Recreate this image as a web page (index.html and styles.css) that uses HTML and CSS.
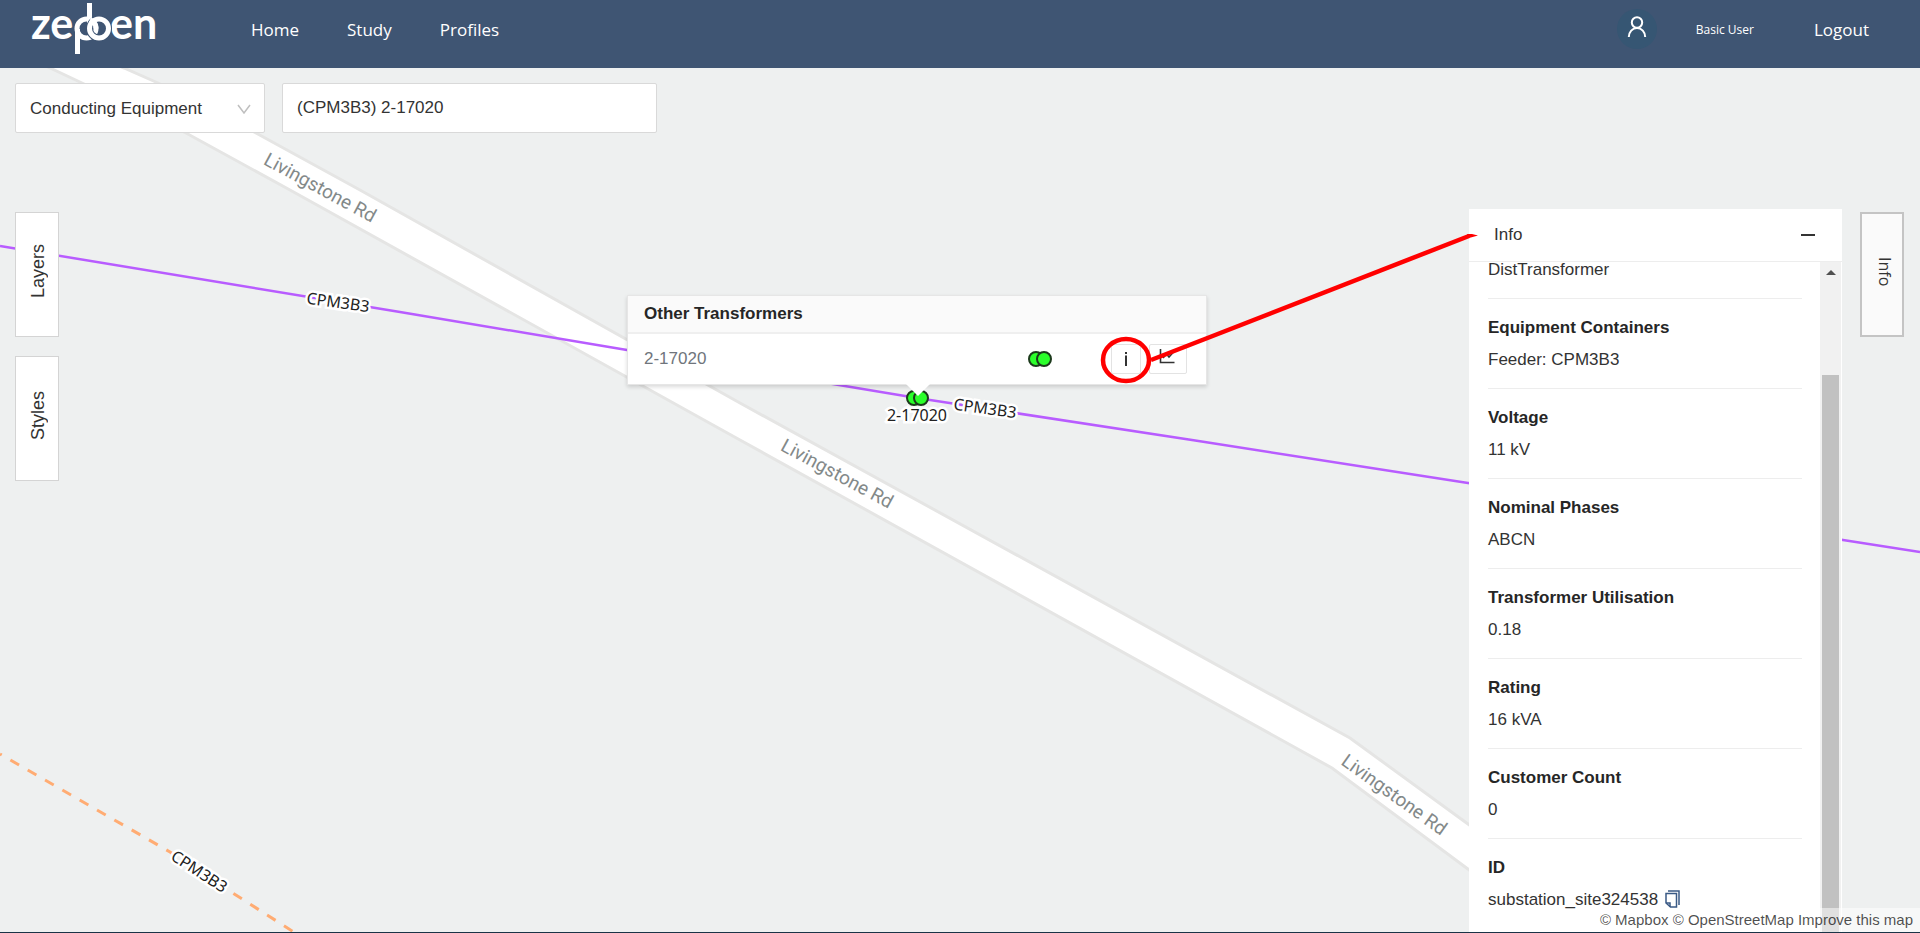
FILE: index.html
```html
<!DOCTYPE html>
<html lang="en">
<head>
<meta charset="utf-8">
<meta name="viewport" content="width=device-width, initial-scale=1">
<title>Zepben network map</title>
<link rel="stylesheet" href="styles.css">
</head>
<body>
<header class="topbar">
  <a class="brand" href="#" aria-label="Zepben home">
    <svg width="128" height="56" viewBox="30 0 128 56">
      <g class="brand-text"><text x="30" y="38">ze</text><text x="109" y="38">en</text></g>
      <g class="brand-rings">
        <path d="M76.500 53V28"/>
        <circle cx="85.500" cy="27.500" r="9.500"/>
        <path d="M88.500 2V27"/>
        <circle class="ring-gap" cx="98" cy="27.500" r="9.500"/>
        <circle cx="98" cy="27.500" r="9.500"/>
        <path d="M89 18.700a9.500 9.500 0 0 1 6 8.800"/>
      </g>
    </svg>
  </a>
  <nav class="nav">
    <a href="#">Home</a>
    <a href="#">Study</a>
    <a href="#">Profiles</a>
  </nav>
  <div class="account">
    <span class="avatar">
      <svg width="20" height="22" viewBox="0 0 20 22" fill="none" stroke="#fff" stroke-width="2"><circle cx="10" cy="6.500" r="5.200"/><path d="M1.800 21a8.200 9 0 0 1 16.400 0"/></svg>
    </span>
    <span class="user">Basic User</span>
    <a class="logout" href="#">Logout</a>
  </div>
</header>

<main class="map">
  <svg class="canvas" aria-label="Map">
    <g transform="translate(0 -68)">
      <path class="road" d="M124 68L158 83L256 133L360 190L740 403L1350 738L1468 824L1860 1100L1800 1112L1480 878L1332 768L740 440L290 190L186 133L82 83L50 68L20 54L90 54Z"/>
      <path class="line" d="M0 246L400 312L627 350L917 398L1192 440L1468 483L1843 540L1920 552"/>
      <path class="line-dashed" d="M0 754L170 852L228 890L300 936"/>
      <text class="street" transform="translate(320 188) rotate(28.500)" y="6">Livingstone Rd</text>
      <text class="street" transform="translate(837 474) rotate(28.500)" y="6">Livingstone Rd</text>
      <text class="street" transform="translate(1394 795) rotate(35.500)" y="6">Livingstone Rd</text>
      <text class="label" transform="translate(338 303) rotate(8)" y="5">CPM3B3</text>
      <text class="label" transform="translate(985 409) rotate(8)" y="5">CPM3B3</text>
      <text class="label" transform="translate(199 872) rotate(33)" y="5">CPM3B3</text>
      <g class="marker"><circle cx="914" cy="398" r="7"/><circle cx="921" cy="398" r="7"/></g>
      <text class="label" x="917" y="421">2-17020</text>
    </g>
  </svg>

  <form class="search">
    <div class="select-wrap">
      <select aria-label="Search type"><option>Conducting Equipment</option></select>
      <svg class="chevron" width="14" height="10" viewBox="0 0 14 10"><path d="M1 1L7 9L13 1"/></svg>
    </div>
    <input class="query" type="text" aria-label="Search" value="(CPM3B3) 2-17020">
  </form>

  <div class="tabs">
    <button class="tab" type="button"><span>Layers</span></button>
    <button class="tab" type="button"><span>Styles</span></button>
  </div>

  <section class="popup">
    <h2>Other Transformers</h2>
    <div class="popup-row">
      <span class="popup-name">2-17020</span>
      <svg class="marker" width="26" height="18" viewBox="0 0 26 18"><circle cx="9" cy="9" r="7"/><circle cx="17" cy="9" r="7"/></svg>
      <button class="icon-btn icon-btn-info" type="button" aria-label="Info"><svg width="4" height="16" viewBox="0 0 4 16"><path d="M2 4.500V15M2 1V3" stroke="#333" stroke-width="2"/></svg></button>
      <button class="icon-btn icon-btn-chart" type="button" aria-label="Chart"><svg width="16" height="16" viewBox="0 0 16 16" fill="none" stroke="#333" stroke-width="1.600"><path d="M1.500 1V14.500H15.500M4 10L7.500 6L10 9L14.500 4"/></svg></button>
    </div>
  </section>

  <aside class="panel">
    <header class="panel-head">
      <span>Info</span>
      <button class="minimise" type="button" aria-label="Minimise"></button>
    </header>
    <div class="panel-body">
      <dl class="facts">
        <div><dd>DistTransformer</dd></div>
        <div><dt>Equipment Containers</dt><dd>Feeder: CPM3B3</dd></div>
        <div><dt>Voltage</dt><dd>11 kV</dd></div>
        <div><dt>Nominal Phases</dt><dd>ABCN</dd></div>
        <div><dt>Transformer Utilisation</dt><dd>0.18</dd></div>
        <div><dt>Rating</dt><dd>16 kVA</dd></div>
        <div><dt>Customer Count</dt><dd>0</dd></div>
        <div><dt>ID</dt><dd>substation_site324538
          <button class="copy" type="button" aria-label="Copy ID"><svg width="15" height="18" viewBox="0 0 15 18" fill="none" stroke="#3a5a85" stroke-width="1.500"><path d="M3 1H14V15"/><path d="M1 3.500H11.500V17H5.500L1 13Z" fill="#fff"/><path d="M1 13H5V17"/></svg></button></dd></div>
      </dl>
      <div class="scrollbar"><i class="scroll-up"></i><i class="thumb"></i></div>
    </div>
  </aside>

  <button class="tab tab-info" type="button"><span>Info</span></button>

  <svg class="canvas callout" aria-hidden="true">
    <g transform="translate(0 -68)">
      <ellipse cx="1126" cy="360" rx="23" ry="21"/>
      <path d="M1151 360L1469 236"/>
      <path class="tip" d="M1467 234L1472 234L1478 235.500L1469 238Z"/>
    </g>
  </svg>

  <footer class="credits">
    <a href="#">© Mapbox</a> <a href="#">© OpenStreetMap</a> <a href="#">Improve this map</a>
  </footer>
</main>
</body>
</html>
```
FILE: styles.css
```css
* { box-sizing: border-box; }

body {
  margin: 0;
  height: 100vh;
  display: flex;
  flex-direction: column;
  font-family: "Liberation Sans", Arial, sans-serif;
  font-size: 17px;
  color: #333;
  overflow: hidden;
}

a { color: inherit; text-decoration: none; }

button, input, select { font: inherit; color: inherit; }

/* Header */
.topbar {
  display: flex;
  align-items: center;
  height: 68px;
  padding: 0 51px 10px 31px;
  background: #3f5573;
  color: #fff;
  font-family: "Open Sans", "Noto Sans", sans-serif;
  font-size: 17px;
}

.brand { margin-right: 92px; }
.brand svg { display: block; overflow: visible; }
.brand-text {
  font-family: Lato, sans-serif;
  font-weight: 700;
  font-size: 43px;
  fill: #fff;
}
.brand-rings { fill: none; stroke: #fff; stroke-width: 5; }
.brand-rings .ring-gap { stroke: #3f5573; stroke-width: 7; }

.nav { display: flex; gap: 48px; }

.account { display: flex; align-items: center; margin-left: auto; }
.avatar {
  display: flex;
  align-items: center;
  justify-content: center;
  width: 40px;
  height: 40px;
  border-radius: 50%;
  background: #365673;
  padding-bottom: 4px;
}
.user { margin: 0 60px 0 39px; font-size: 12px; }

/* Map */
.map {
  position: relative;
  flex: 1;
  background: #eef0f0;
  border-bottom: 1px solid #1a3346;
  overflow: hidden;
}
.canvas { position: absolute; inset: 0; width: 100%; height: 100%; }
.road { fill: #fff; stroke: #e5e5e4; stroke-width: 3; }
.line { fill: none; stroke: #b85cff; stroke-width: 2.5; }
.line-dashed {
  fill: none;
  stroke: #ffac73;
  stroke-width: 3;
  stroke-dasharray: 10 10;
  stroke-dashoffset: 8;
}
.street {
  font-family: Roboto, sans-serif;
  font-size: 19px;
  text-anchor: middle;
  fill: #838989;
}
.label {
  font-family: "Noto Sans", "Open Sans", sans-serif;
  font-size: 16px;
  text-anchor: middle;
  fill: #222;
  stroke: #fff;
  stroke-width: 5;
  paint-order: stroke;
}
.marker circle { fill: #2bff2b; stroke: #1c3a1c; stroke-width: 2; }

.callout { fill: none; stroke: #f00; stroke-width: 4.5; pointer-events: none; }
.callout .tip { fill: #f00; stroke: none; }

/* Search */
.search { position: relative; display: flex; gap: 17px; padding: 15px; }
.select-wrap { position: relative; width: 250px; }
.search select, .query {
  width: 100%;
  height: 50px;
  border: 1px solid #d9d9d9;
  border-radius: 2px;
  background: #fff;
  padding: 0 14px;
  appearance: none;
  outline: none;
}
.search .query { width: 375px; }
.chevron {
  position: absolute;
  right: 14px;
  top: 21px;
  fill: none;
  stroke: #bfbfbf;
  stroke-width: 1.5;
  pointer-events: none;
}

/* Side tabs */
.tabs { position: absolute; left: 15px; top: 144px; display: grid; gap: 19px; }
.tab {
  width: 44px;
  height: 125px;
  display: flex;
  align-items: center;
  justify-content: center;
  padding: 0 0 6px 2px;
  border: 1px solid #d4d4d4;
  background: #fff;
}
.tab span { writing-mode: vertical-rl; transform: rotate(180deg); font-size: 18px; }
.tab-info {
  position: absolute;
  right: 16px;
  top: 144px;
  padding-left: 6px;
  border: 2px solid #c4c4c4;
  background: #fafafa;
}
.tab-info span {
  transform: none;
  font-family: "Open Sans", "Noto Sans", sans-serif;
  font-size: 16px;
}

/* Popup */
.popup {
  position: absolute;
  left: 627px;
  top: 227px;
  width: 580px;
  background: #fff;
  border: 1px solid #e6e6e6;
  box-shadow: 0 2px 4px rgba(0, 0, 0, .15);
}
.popup::after {
  content: "";
  position: absolute;
  left: 278px;
  top: 100%;
  border: 12px solid transparent;
  border-top-color: #fff;
  border-bottom: 0;
}
.popup h2 {
  margin: 0;
  padding: 0 16px;
  font-size: 17px;
  line-height: 36px;
  color: #262626;
  background: #fafafa;
  border-bottom: 2px solid #efefef;
}
.popup-row { display: flex; align-items: center; height: 50px; padding: 0 19px 0 16px; }
.popup-name { flex: 1; color: #70757c; }
.icon-btn {
  display: flex;
  align-items: center;
  justify-content: center;
  height: 30px;
  padding: 0;
  background: #fff;
  border: 1px solid #e3e3e3;
  border-radius: 2px;
}
.icon-btn-info { width: 30px; margin: 0 8px 0 58px; }
.icon-btn-chart { width: 38px; padding: 0 2px 6px 0; }

/* Info panel */
.panel {
  position: absolute;
  right: 78px;
  top: 141px;
  bottom: 0;
  width: 373px;
  display: flex;
  flex-direction: column;
  background: #fff;
}
.panel-head {
  display: flex;
  align-items: center;
  justify-content: space-between;
  height: 53px;
  padding: 0 27px 0 25px;
  border-bottom: 1px solid #ededed;
}
.minimise { width: 14px; height: 2px; padding: 0; border: 0; background: #333; }
.panel-body { flex: 1; display: flex; min-height: 0; overflow: hidden; }
.facts { flex: 1; margin: -8px 18px 0 19px; }
.facts div { padding: 13px 0 12px; border-bottom: 1px solid #ededed; line-height: 32px; }
.facts div:first-child { padding-top: 0; }
.facts div:last-child { border: 0; }
.facts dt { font-weight: 700; color: #262626; }
.facts dd { margin: 0; }
.copy { margin-left: 2px; padding: 0; border: 0; background: none; line-height: 0; vertical-align: -3px; }
.scrollbar {
  width: 21px;
  margin-right: 1px;
  display: flex;
  flex-direction: column;
  align-items: center;
  background: #f1f1f1;
}
.scroll-up {
  margin: 8px 0 100px;
  border: 5px solid transparent;
  border-top: 0;
  border-bottom-color: #505050;
}
.thumb { flex: 1; width: 17px; background: #c1c1c1; }

.credits {
  position: absolute;
  right: 0;
  bottom: 0;
  padding: 0 7px;
  font-size: 15px;
  line-height: 24px;
  color: rgba(0, 0, 0, .7);
  background: rgba(255, 255, 255, .5);
}
```
